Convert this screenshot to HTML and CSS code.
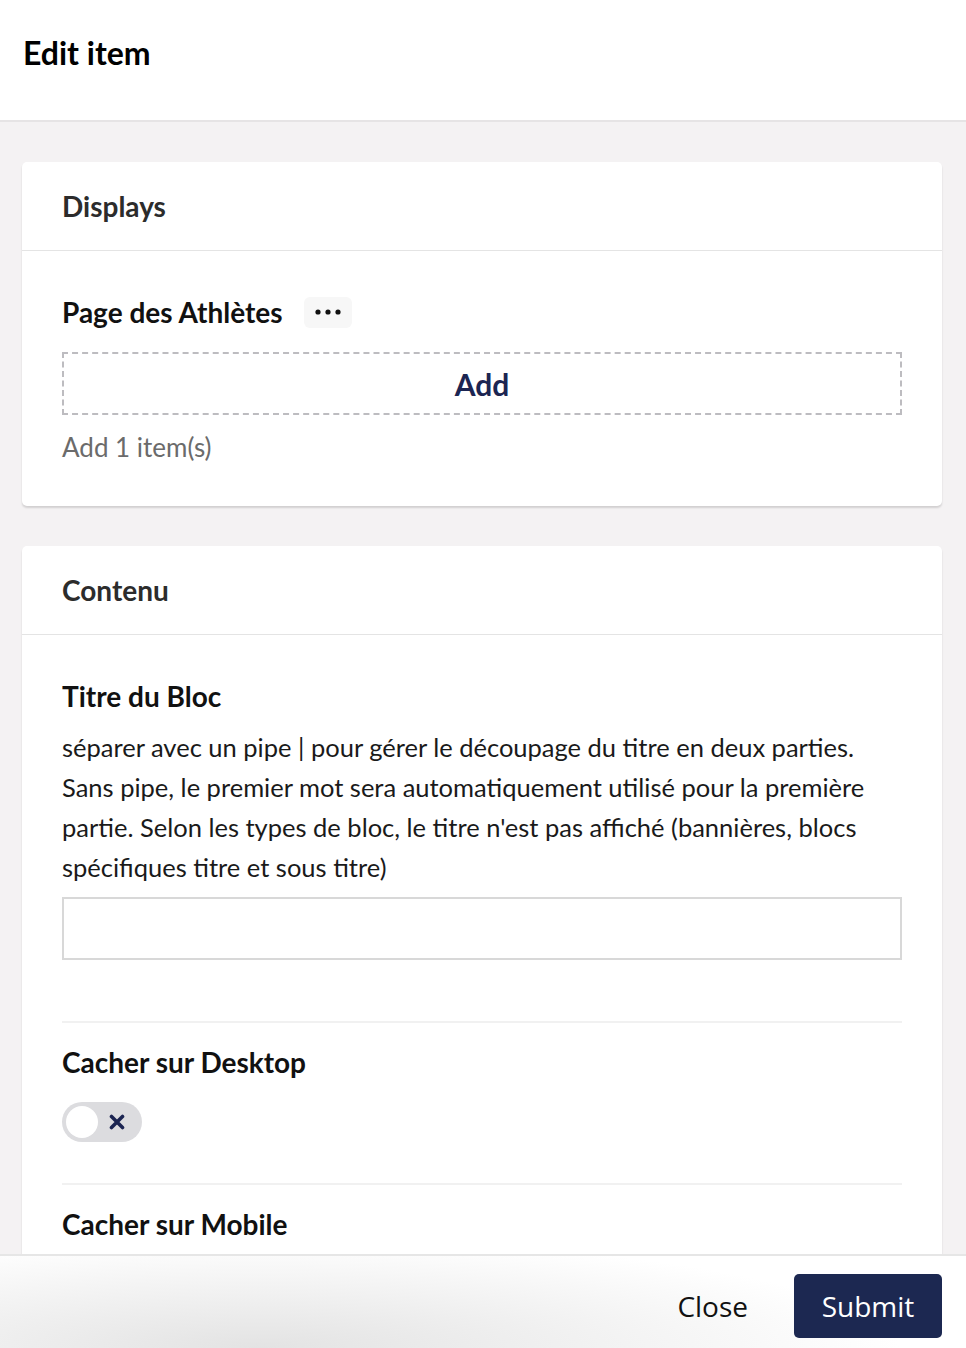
FILE: index.html
```html
<!DOCTYPE html>
<html lang="en">
<head>
  <meta charset="UTF-8">
  <meta name="viewport" content="width=device-width, initial-scale=1.0" />
  <title>Edit item</title>
  <link rel="stylesheet" href="styles.css">
</head>
<body>
  <header class="modal-head">
    <h1>Edit item</h1>
  </header>

  <main class="modal-body">
    <section class="card">
      <div class="card-head">Displays</div>
      <div class="card-content">
        <div class="field-title">
          <span>Page des Athlètes</span>
          <button class="more" type="button" aria-label="More">
            <svg width="26" height="6" viewBox="0 0 26 6"><circle cx="3" cy="3" r="2.6"/><circle cx="13" cy="3" r="2.6"/><circle cx="23" cy="3" r="2.6"/></svg>
          </button>
        </div>
        <button class="add-box" type="button">Add</button>
        <div class="hint">Add 1 item(s)</div>
      </div>
    </section>

    <section class="card">
      <div class="card-head">Contenu</div>
      <div class="card-content">
        <div class="field">
          <div class="field-title">Titre du Bloc</div>
          <p class="desc">séparer avec un pipe | pour gérer le découpage du titre en deux parties. Sans pipe, le premier mot sera automatiquement utilisé pour la première partie. Selon les types de bloc, le titre n'est pas affiché (bannières, blocs spécifiques titre et sous titre)</p>
          <input class="text-input" type="text">
        </div>
        <div class="field">
          <div class="field-title">Cacher sur Desktop</div>
          <div class="toggle">
            <span class="knob"></span>
            <svg class="cross" width="16" height="16" viewBox="0 0 16 16"><path d="M2.5 2.5 L13.5 13.5 M13.5 2.5 L2.5 13.5"/></svg>
          </div>
        </div>
        <div class="field">
          <div class="field-title">Cacher sur Mobile</div>
        </div>
      </div>
    </section>
  </main>

  <footer class="modal-foot">
    <button class="btn-close" type="button">Close</button>
    <button class="btn-submit" type="button">Submit</button>
  </footer>
</body>
</html>
```

FILE: styles.css
```css
* {
  box-sizing: border-box;
}

html, body {
  height: 100%;
}

body {
  margin: 0;
  font-family: 'Lato', 'Open Sans', sans-serif;
  color: #111;
  background: #f4f2f3;
  display: flex;
  flex-direction: column;
  overflow: hidden;
}

.modal-head {
  background: white;
  height: 122px;
  border-bottom: 2px solid #e6e4e5;
  padding: 0 23px;
}

.modal-head h1 {
  margin: 0;
  padding-top: 33px;
  font-size: 32px;
  line-height: 40px;
  font-weight: 700;
  color: #000;
}

.modal-body {
  flex: 1;
  overflow: hidden;
  padding: 40px 24px 0 22px;
}

.card {
  background: white;
  border-radius: 5px;
  box-shadow: 0 2px 2px rgba(0, 0, 0, 0.14);
  margin-bottom: 40px;
}

.card-head {
  height: 89px;
  padding: 0 40px;
  display: flex;
  align-items: center;
  font-size: 28px;
  font-weight: 700;
  color: #2c2c2c;
  border-bottom: 1px solid #e4e4e4;
}

.card-content {
  padding: 45px 40px 43px;
}

.field-title {
  display: flex;
  align-items: center;
  font-size: 28px;
  line-height: 32px;
  font-weight: 700;
  color: #111;
}

.more {
  margin-left: 21px;
  width: 48px;
  height: 31px;
  border: none;
  border-radius: 6px;
  background: #f7f7f7;
  display: flex;
  align-items: center;
  justify-content: center;
  padding: 0;
}

.more svg {
  fill: #111;
}

.add-box {
  display: block;
  width: 100%;
  height: 63px;
  margin-top: 24px;
  border: 2px dashed #bdbcc0;
  background: white;
  font-family: inherit;
  font-size: 30px;
  font-weight: 700;
  color: #1c2552;
}

.hint {
  margin-top: 16px;
  font-size: 26px;
  line-height: 32px;
  color: #6b6b6b;
}

.card-content .field {
  border-bottom: 2px solid #f1f1f1;
  padding: 23px 0 41px;
}

.card-content .field:first-child {
  padding-top: 0;
  padding-bottom: 61px;
}

.card-content .field:last-child {
  border-bottom: none;
  padding-bottom: 0;
}

.desc {
  margin: 15px 0 0;
  font-size: 25.5px;
  line-height: 40px;
  color: #1a1a1a;
}

.text-input {
  display: block;
  width: 100%;
  height: 63px;
  margin-top: 10px;
  border: 2px solid #d8d8d8;
  font-size: 24px;
  font-family: inherit;
}

.toggle {
  position: relative;
  margin-top: 24px;
  width: 80px;
  height: 40px;
  border-radius: 20px;
  background: #dcdcdf;
}

.knob {
  position: absolute;
  left: 4px;
  top: 4px;
  width: 32px;
  height: 32px;
  border-radius: 50%;
  background: white;
}

.cross {
  position: absolute;
  left: 47px;
  top: 12px;
  stroke: #1c2552;
  stroke-width: 3.6;
  stroke-linecap: round;
  fill: none;
}

.modal-foot {
  height: 94px;
  flex-shrink: 0;
  border-top: 2px solid #e6e6e6;
  background:
    radial-gradient(ellipse 640px 110px at 260px 100%, #e3e3e3, rgba(255, 255, 255, 0) 100%),
    white;
  display: flex;
  justify-content: flex-end;
  align-items: flex-start;
  padding: 18px 24px 0;
  gap: 22px;
}

.modal-foot button {
  font-family: 'Open Sans', sans-serif;
  font-size: 28px;
  height: 64px;
  border: none;
  cursor: pointer;
}

.btn-close {
  background: transparent;
  color: #111;
  padding: 0 24px;
}

.btn-submit {
  width: 148px;
  background: #1c2851;
  color: white;
  border-radius: 5px;
}
```
